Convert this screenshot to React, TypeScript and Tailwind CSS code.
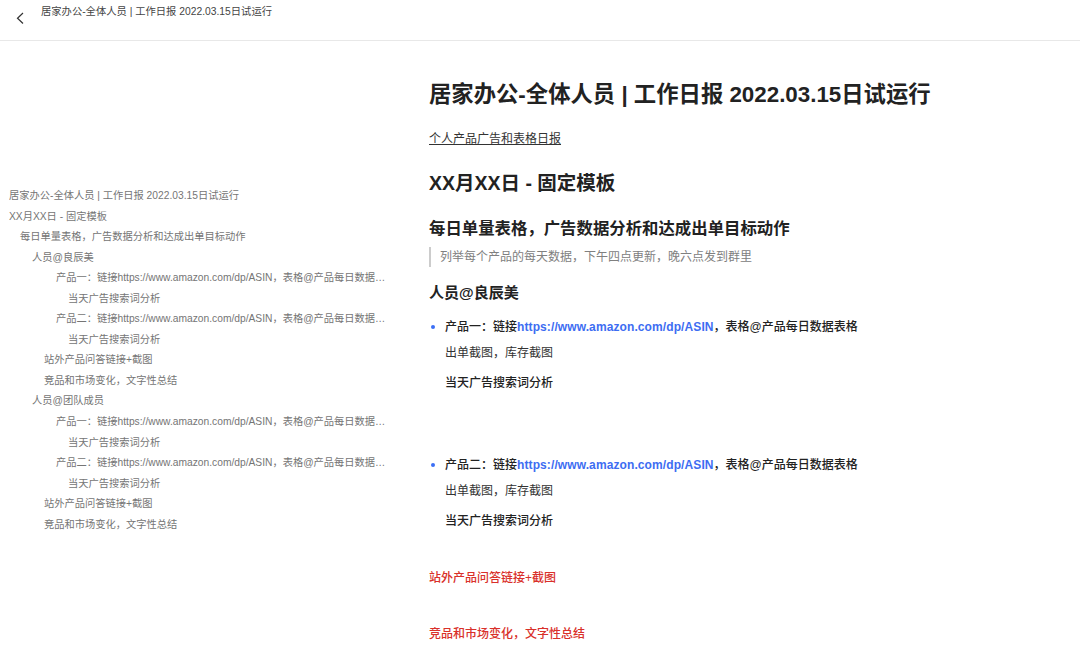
import React from "react";

const toc: [string, string][] = [
  ["居家办公-全体人员 | 工作日报 2022.03.15日试运行", "pl-0"],
  ["XX月XX日 - 固定模板", "pl-0"],
  ["每日单量表格，广告数据分析和达成出单目标动作", "pl-[11px]"],
  ["人员@良辰美", "pl-[23px]"],
  ["产品一：链接https://www.amazon.com/dp/ASIN，表格@产品每日数据表格", "pl-[47px]"],
  ["当天广告搜索词分析", "pl-[59px]"],
  ["产品二：链接https://www.amazon.com/dp/ASIN，表格@产品每日数据表格", "pl-[47px]"],
  ["当天广告搜索词分析", "pl-[59px]"],
  ["站外产品问答链接+截图", "pl-[35px]"],
  ["竞品和市场变化，文字性总结", "pl-[35px]"],
  ["人员@团队成员", "pl-[23px]"],
  ["产品一：链接https://www.amazon.com/dp/ASIN，表格@产品每日数据表格", "pl-[47px]"],
  ["当天广告搜索词分析", "pl-[59px]"],
  ["产品二：链接https://www.amazon.com/dp/ASIN，表格@产品每日数据表格", "pl-[47px]"],
  ["当天广告搜索词分析", "pl-[59px]"],
  ["站外产品问答链接+截图", "pl-[35px]"],
  ["竞品和市场变化，文字性总结", "pl-[35px]"],
];

function Product({ name }: { name: string }) {
  return (
    <div>
      <div className="flex items-center h-5 text-[12px] font-medium text-[#222222]">
        <span className="w-1 h-1 rounded-full bg-[#3b6ff5] ml-[2px] mr-[10px] shrink-0" />
        <span>
          {name}：链接<span className="text-[#3d6df2] font-bold tracking-[0.1px]">https://www.amazon.com/dp/ASIN</span>，表格@产品每日数据表格
        </span>
      </div>
      <div className="mt-[6px] ml-4 h-5 leading-5 text-[12px] text-[#333333]">出单截图，库存截图</div>
      <div className="mt-[10px] ml-4 h-5 leading-5 text-[12px] font-medium text-[#222222]">当天广告搜索词分析</div>
    </div>
  );
}

export default function App() {
  return (
    <div
      className="w-[1080px] h-[657px] overflow-hidden bg-white flex flex-col"
      style={{ fontFamily: '"Liberation Sans", "Noto Sans CJK SC", sans-serif' }}
    >
      <header className="h-[41px] shrink-0 border-b border-[#e8e8e8] flex items-start">
        <svg className="ml-[15px] mt-[12px] text-[#333333]" width="11" height="12" viewBox="0 0 11 12" fill="none">
          <path d="M8 1 L2.5 6.2 L8 11.5" stroke="currentColor" strokeWidth="1.2" />
        </svg>
        <div className="ml-[15px] mt-[4px] text-[10.3px] leading-4 text-[#444444]">
          居家办公-全体人员 | 工作日报 2022.03.15日试运行
        </div>
      </header>
      <div className="flex flex-1 min-h-0">
        <aside className="w-[429px] shrink-0 pl-[9px] pt-[145px] text-[10.25px] text-[#757575]">
          {toc.map(([label, indent], i) => (
            <div key={i} className={`h-[20.55px] leading-[20.55px] w-[380px] truncate ${indent}`}>
              {label}
            </div>
          ))}
        </aside>
        <main className="flex-1 min-w-0">
          <h1 className="mt-[38px] h-8 leading-8 text-[22.35px] font-bold text-[#222222]">
            居家办公-全体人员 | 工作日报 2022.03.15日试运行
          </h1>
          <p className="mt-[18px] h-5 leading-5 text-[12px] text-[#333333] underline underline-offset-[1px]">
            个人产品广告和表格日报
          </p>
          <h2 className="mt-[20px] h-7 leading-7 text-[19.5px] font-bold text-[#222222]">XX月XX日 - 固定模板</h2>
          <h3 className="mt-[18px] h-[26px] leading-[26px] text-[16.4px] font-bold text-[#222222]">
            每日单量表格，广告数据分析和达成出单目标动作
          </h3>
          <blockquote className="mt-[6px] h-5 leading-5 border-l-2 border-[#cccccc] pl-[9px] text-[12px] text-[#808080]">
            列举每个产品的每天数据，下午四点更新，晚六点发到群里
          </blockquote>
          <h4 className="mt-[14px] h-[24px] leading-[24px] text-[15px] font-bold text-[#222222]">人员@良辰美</h4>
          <div className="mt-[12px]">
            <Product name="产品一" />
          </div>
          <div className="mt-[62px]">
            <Product name="产品二" />
          </div>
          <div className="mt-[37px] h-5 leading-5 text-[12px] font-medium text-[#d9302a]">站外产品问答链接+截图</div>
          <div className="mt-[36px] h-5 leading-5 text-[12px] font-medium text-[#d9302a]">竞品和市场变化，文字性总结</div>
        </main>
      </div>
    </div>
  );
}
